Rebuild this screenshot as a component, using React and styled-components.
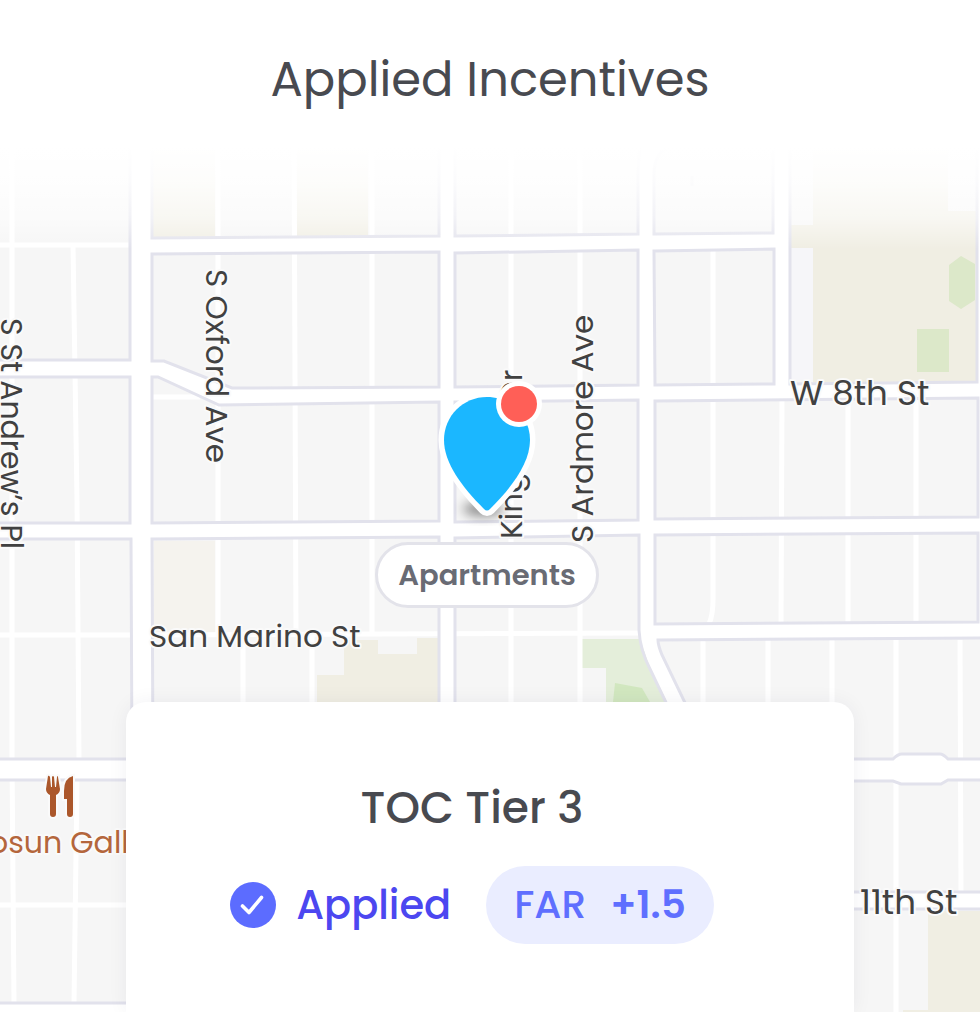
import React from "react";
import styled, { createGlobalStyle } from "styled-components";

const GlobalStyle = createGlobalStyle`
  *, *::before, *::after { box-sizing: border-box; }
  body {
    margin: 0;
    background: #ffffff;
    font-family: Poppins, Inter, "Liberation Sans", sans-serif;
    -webkit-font-smoothing: antialiased;
  }
`;

const Page = styled.main`
  position: relative;
  display: flex;
  flex-direction: column;
  min-height: 100vh;
  overflow: hidden;
`;

const MapCanvas = styled.svg`
  position: absolute;
  inset: 0;
  width: 100%;
  height: 100%;
`;

const Header = styled.header`
  position: relative;
  padding: 44px 24px 32px;
  text-align: center;
`;

const Title = styled.h1`
  margin: 0;
  font-size: 48px;
  line-height: 72px;
  font-weight: 400;
  color: #484a50;
`;

const Marker = styled.section`
  position: relative;
  display: flex;
  flex-direction: column;
  align-items: center;
  gap: 16px;
  padding: 232px 6px 94px 0;
`;

const PinIcon = styled.svg`
  display: block;
  width: 112px;
  height: 146px;
`;

const PlaceLabel = styled.div`
  padding: 8px 20px;
  border: 3px solid #e3e3ea;
  border-radius: 33px;
  background: #ffffff;
  color: #696b74;
  font-size: 29px;
  line-height: 44px;
  font-weight: 600;
`;

const Card = styled.article`
  position: relative;
  flex: 1;
  display: flex;
  flex-direction: column;
  align-items: center;
  gap: 26px;
  width: calc(100% - 252px);
  min-width: 560px;
  margin: 0 auto;
  padding: 74px 36px 68px 0;
  border-radius: 20px 20px 0 0;
  background: #ffffff;
  box-shadow: 0 0 20px rgba(40, 40, 60, 0.06);
`;

const CardTitle = styled.h2`
  margin: 0;
  font-size: 44px;
  line-height: 64px;
  font-weight: 500;
  color: #484a50;
`;

const StatusRow = styled.div`
  display: flex;
  align-items: center;
  gap: 35px;
`;

const Status = styled.div`
  display: flex;
  align-items: center;
  gap: 20px;
  color: #4c47f0;
  font-size: 40px;
  line-height: 60px;
  font-weight: 500;
`;

const CheckIcon = styled.svg`
  width: 46px;
  height: 46px;
`;

const Bonus = styled.div`
  display: flex;
  gap: 24px;
  padding: 9px 28px;
  border-radius: 39px;
  background: #eaedff;
  color: #5f6fff;
  font-size: 39px;
  line-height: 60px;
  font-weight: 500;
`;

const BonusValue = styled.strong`
  font-weight: 600;
`;

const StreetText = styled.text`
  font-size: ${(p) => p.$size || 31}px;
  fill: ${(p) => p.$color || "#414141"};
  stroke: #fafafa;
  stroke-width: 4px;
  stroke-linejoin: round;
  paint-order: stroke;
`;

const blocks = [
  "M-5 120H130V360H-5Z",
  "M-5 377H130V523H-5Z",
  "M-5 539H131L132 759H-5Z",
  "M-5 780H132V1003H-5Z",
  "M152 120H439V236L152 238Z",
  "M152 254L439 252V387L232 388L164 361H152Z",
  "M152 377H158L219 405L439 402V521L152 523Z",
  "M152 539L439 537V759H153Z",
  "M455 120H645Q638 150 638 175V234L455 236Z",
  "M455 253L638 250V385L455 387Z",
  "M455 402L638 400V520L455 522Z",
  "M455 538L639 535V630Q640 650 650 669L693 759H455Z",
  "M654 234V175Q654 150 674 144L773 135V233Z",
  "M654 251L774 249V384L655 385Z",
  "M790 120H977V382L790 384Z",
  "M655 401L978 398V517L655 519Z",
  "M655 535L978 533V622L655 624Z",
  "M658 640L985 638V759H948Q943 754 940 754H902Q898 754 893 759H712L662 655Q658 645 658 640Z",
  "M720 781H893L901 784H941L948 780H985V892H720Z",
  "M720 909H985V1020H720Z",
];

const lanes = [
  "M12 120V759L14 1003M73 245L77 500L79 759M77 780L74 1003",
  "M-5 245H129M-5 635H131M-5 905H132",
  "M218 120V635M294 120L296 635M372 120V635M243 635V702M312 635V702",
  "M153 635L638 633M153 397H200",
  "M511 120V702M580 120V702",
  "M713 250V384M713 400V600Q713 615 709 624M782 400L781 624M848 400V624M916 400V624",
  "M703 640V702M768 640V702M832 640V702M896 640V1012M960 640L961 892",
];

function StreetMap() {
  return (
    <MapCanvas
      viewBox="0 0 980 1012"
      preserveAspectRatio="xMidYMin slice"
      role="img"
      aria-label="Street map"
    >
      <defs>
        <linearGradient id="mapFade" x1="0" y1="0" x2="0" y2="1">
          <stop offset="0" stopColor="#fff" />
          <stop offset="0.35" stopColor="#fff" stopOpacity="0.85" />
          <stop offset="0.7" stopColor="#fff" stopOpacity="0.55" />
          <stop offset="1" stopColor="#fff" stopOpacity="0" />
        </linearGradient>
      </defs>
      <rect width="980" height="1012" fill="#fff" />
      <g fill="#f6f6f6">
        {blocks.map((d) => (
          <path key={d} d={d} />
        ))}
      </g>

      <g fill="#f0eee3">
        <path d="M152 120H215V238H152ZM297 120H368V237H297Z" />
        <path d="M813 120H948V211H977V382H813V248H791V225H813Z" />
        <path d="M317 675H344V640H378V654H417V638H438V759H317Z" />
        <path d="M928 911H985V1020H903V1010H928Z" />
      </g>
      <path d="M791 248H813V380H791Z" fill="#f6f6f9" />
      <path d="M154 541H215V632H154Z" fill="#f5f3ee" />
      <path d="M581 639H640L650 668L667 702H606V668H581Z" fill="#e4eeda" />
      <path d="M615 683L642 688L650 702H613Z" fill="#d1e7bf" />
      <path
        d="M949 265L961 256L975 264V300L961 309L949 301ZM917 329H949V372H917Z"
        fill="#dce8c9"
      />

      <g fill="none" stroke="#fff" strokeWidth="5">
        {lanes.map((d) => (
          <path key={d} d={d} />
        ))}
      </g>
      <g fill="none" stroke="#e2e2ec" strokeWidth="3">
        {blocks.map((d) => (
          <path key={d} d={d} />
        ))}
      </g>
      <path d="M692 176V186" stroke="#e8e8ec" strokeWidth="3" />

      <rect width="980" height="148" fill="#fff" />
      <rect y="147" width="980" height="102" fill="url(#mapFade)" />

      <StreetText transform="translate(1 318) rotate(90)" $size={30}>S St Andrew’s Pl</StreetText>
      <StreetText transform="translate(206 269) rotate(90)">S Oxford Ave</StreetText>
      <StreetText transform="translate(522 539) rotate(-90)">Kingsley Dr</StreetText>
      <StreetText transform="translate(593 543) rotate(-90)">S Ardmore Ave</StreetText>
      <StreetText x="149" y="647">San Marino St</StreetText>
      <StreetText x="790" y="405" $size={34}>W 8th St</StreetText>
      <StreetText x="860" y="914" $size={34}>11th St</StreetText>
      <StreetText x="-11" y="853" $size={30} $color="#b4663c">osun Gall</StreetText>

      <g fill="#ab572b" stroke="#fafafa" strokeWidth="4" paintOrder="stroke">
        <path d="M48 776Q49 775 50 777L51 787H52L52 777Q53 775 54 777L55 787H56L57 777Q58 775 58 777L60 789Q60 793 56 795L56 814Q56 817 53 817Q50 817 50 814L50 795Q46 793 46 789Z" />
        <path d="M73 776V814Q73 817 70 817Q67 817 67 814V799H64V791Q64 778 73 776Z" />
      </g>
    </MapCanvas>
  );
}

function Pin() {
  return (
    <PinIcon viewBox="431 380 112 146" aria-hidden="true">
      <defs>
        <filter id="pinBlur" x="-50%" y="-150%" width="200%" height="400%">
          <feGaussianBlur stdDeviation="6" />
        </filter>
      </defs>
      <ellipse cx="483" cy="509" rx="20" ry="7" fill="#000" opacity="0.45" filter="url(#pinBlur)" />
      <path
        d="M487 397C511 397 530 416 530 440C530 463 512 487 490 509Q487 512 484 509C462 487 444 463 444 440C444 416 463 397 487 397Z"
        fill="#1bb7ff"
        stroke="#fff"
        strokeWidth="11"
        strokeLinejoin="round"
        paintOrder="stroke"
      />
      <circle cx="519" cy="404" r="23" fill="#fff" />
      <circle cx="519" cy="404" r="18" fill="#ff5f57" />
    </PinIcon>
  );
}

export default function App() {
  return (
    <>
      <GlobalStyle />
      <Page>
        <StreetMap />
        <Header>
          <Title>Applied Incentives</Title>
        </Header>
        <Marker>
          <Pin />
          <PlaceLabel>Apartments</PlaceLabel>
        </Marker>
        <Card>
          <CardTitle>TOC Tier 3</CardTitle>
          <StatusRow>
            <Status>
              <CheckIcon viewBox="0 0 46 46" aria-hidden="true">
                <circle cx="23" cy="23" r="23" fill="#5c6cff" />
                <path
                  d="M12.5 24L19 30.5L31.5 15.5"
                  fill="none"
                  stroke="#fff"
                  strokeWidth="3.6"
                  strokeLinecap="round"
                  strokeLinejoin="round"
                />
              </CheckIcon>
              Applied
            </Status>
            <Bonus>
              <span>FAR</span>
              <BonusValue>+1.5</BonusValue>
            </Bonus>
          </StatusRow>
        </Card>
      </Page>
    </>
  );
}
